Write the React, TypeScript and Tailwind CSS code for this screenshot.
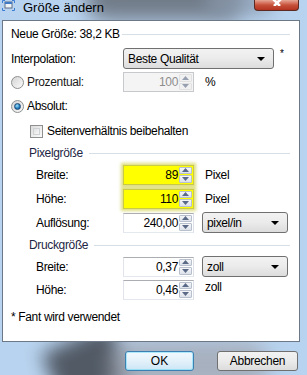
const Up = () => (
    <svg width="7" height="4" viewBox="0 0 7 4"><path d="M0 4 L3.5 0 L7 4 Z" fill="#5a6a86" /></svg>
);
const Down = () => (
    <svg width="7" height="4" viewBox="0 0 7 4"><path d="M0 0 L3.5 4 L7 0 Z" fill="#5a6a86" /></svg>
);

const Spin = ({ value, hi, disabled }: { value: string; hi?: boolean; disabled?: boolean }) => (
    <div
        className={`flex h-[20px] w-[71px] shrink-0 border ${
            hi
                ? 'border-[#c9c94a] bg-[#ffff00] shadow-[0_0_3px_2px_rgba(200,200,40,0.6)]'
                : disabled
                ? 'border-[#c7c9cc] bg-[#f4f4f4]'
                : 'border-[#abadb3] border-r-[#dbdfe6] border-b-[#e3e9ef] border-l-[#e2e3ea] bg-white'
        }`}
    >
        <div className={`flex-1 flex items-center justify-end pr-[1px] text-[12px] ${disabled ? 'text-[#8d8d8d]' : 'text-black'}`}>
            {value}
        </div>
        <div className="w-[14px] flex flex-col gap-px py-px pr-px">
            <div className={`flex-1 flex items-center justify-center rounded-[1px] border ${disabled ? 'border-[#d6d6d6] bg-[#f0f0f0] opacity-60' : 'border-[#b7c0cc] bg-gradient-to-b from-[#f5f6f8] to-[#dde2ea]'}`}>
                <Up />
            </div>
            <div className={`flex-1 flex items-center justify-center rounded-[1px] border ${disabled ? 'border-[#d6d6d6] bg-[#f0f0f0] opacity-60' : 'border-[#b7c0cc] bg-gradient-to-b from-[#f5f6f8] to-[#dde2ea]'}`}>
                <Down />
            </div>
        </div>
    </div>
);

const Combo = ({ value, w }: { value: string; w: string }) => (
    <div className={`${w} h-[21px] shrink-0 flex items-center rounded-[3px] border border-[#707070] bg-gradient-to-b from-[#f2f2f2] via-[#ebebeb] to-[#dcdcdc] pl-[4px] pr-[8px] text-[12px]`}>
        <span className="flex-1 whitespace-nowrap">{value}</span>
        <svg width="8" height="4" viewBox="0 0 8 4"><path d="M0 0 L8 0 L4 4 Z" fill="#000" /></svg>
    </div>
);

const Radio = ({ checked }: { checked?: boolean }) => (
    <div className="w-[13px] h-[13px] shrink-0 rounded-full border border-[#8e8f8f] bg-gradient-to-br from-[#d4d4d4] to-[#fbfbfb] flex items-center justify-center">
        {checked && <div className="w-[7px] h-[7px] rounded-full bg-[radial-gradient(circle_at_40%_35%,#9fe3ff,#1b76b8_60%,#0c4a84)] border border-[#1f4b77]"></div>}
    </div>
);

const Section = ({ title }: { title: string }) => (
    <div className="flex items-center h-[18px] pl-[26px] pr-[9px] mt-[3px] text-[#1d2544]">
        <span className="whitespace-nowrap">{title}</span>
        <div className="flex-1 h-px bg-[#d5dfe5] ml-[6px]"></div>
    </div>
);

const Row = ({ label, children, mt = 'mt-[3px]' }: { label: string; children: React.ReactNode; mt?: string }) => (
    <div className={`flex items-center h-[21px] ${mt}`}>
        <div className="w-[120px] shrink-0 pl-[33px]">{label}</div>
        {children}
    </div>
);

export default function App() {
    return (
        <div className="w-[307px] h-[375px] relative overflow-hidden bg-[#b8d3ef] font-['Liberation_Sans',Arial,sans-serif] text-[11.5px] text-black leading-none">
            {/* glass blur */}
            <div className="absolute left-[85px] top-[-22px] w-[160px] h-[42px] rounded-full bg-[#5f656e] blur-[10px] opacity-80"></div>
            <div className="absolute left-[205px] top-[-10px] w-[70px] h-[25px] rounded-full bg-[#8a9aae] blur-[8px] opacity-70"></div>
            <div className="absolute left-[50px] top-[336px] w-[75px] h-[60px] rotate-[-25deg] bg-[#40454e] blur-[9px] opacity-85"></div>
            <div className="absolute left-[110px] top-[340px] w-[160px] h-[50px] rounded-full bg-[#a3a8b3] blur-[10px] opacity-80"></div>

            <div className="relative flex flex-col h-full">
                {/* title bar */}
                <div className="h-[20px] flex items-start relative">
                    <svg className="ml-[2px]" width="13" height="11" viewBox="0 0 13 11">
                        <rect x="3" y="2" width="7" height="6" fill="#eef3f8" stroke="#5c6f86" strokeWidth="1" />
                        <rect x="3" y="2" width="7" height="2" fill="#3f79c6" />
                        <path d="M0.5 3 V0.5 H3 M10 0.5 H12.5 V3 M12.5 8 V10.5 H10 M3 10.5 H0.5 V8" fill="none" stroke="#3c7cd6" strokeWidth="1" />
                    </svg>
                    <span className="ml-[8px] mt-[1px] text-[13px]">Größe ändern</span>
                    <div className="absolute left-[254px] top-0 w-[45px] h-[11px] rounded-b-[4px] border border-t-0 border-[#5a2a23] bg-gradient-to-b from-[#e6a695] via-[#c7513b] to-[#b2331f] flex items-start justify-center overflow-hidden">
                        <svg width="14" height="6" viewBox="0 0 14 6"><path d="M2 -2 L7 3 L12 -2 M4 6 L7 3 L10 6" stroke="#fff" strokeWidth="2.5" fill="none" /></svg>
                    </div>
                </div>

                {/* white panel */}
                <div className="ml-[2px] w-[298px] h-[322px] border border-[#6d7886] bg-white flex flex-col pt-[4px] text-[12px] tracking-[-0.35px]">
                    <div className="flex items-center h-[18px] pl-[8px] pr-[9px]">
                        <div className="w-[111px] shrink-0 whitespace-nowrap">Neue Größe: 38,2 KB</div>
                        <div className="flex-1 h-px bg-[#d5dfe5]"></div>
                    </div>

                    <div className="flex items-center h-[21px] mt-[5px] pl-[8px]">
                        <div className="w-[112px] shrink-0">Interpolation:</div>
                        <Combo value="Beste Qualität" w="w-[151px]" />
                        <span className="ml-[6px] self-start mt-[1px] text-[10px]">*</span>
                    </div>

                    <div className="flex items-center h-[20px] mt-[3px] pl-[8px]">
                        <div className="w-[112px] shrink-0 flex items-center gap-[3px] text-[#1a1a1a]">
                            <Radio />
                            <span>Prozentual:</span>
                        </div>
                        <Spin value="100" disabled />
                        <span className="ml-[11px]">%</span>
                    </div>

                    <div className="flex items-center h-[20px] mt-[4px] pl-[8px] gap-[3px]">
                        <Radio checked />
                        <span>Absolut:</span>
                    </div>

                    <div className="flex items-center h-[20px] mt-[5px] pl-[27px] gap-[4px]">
                        <div className="w-[13px] h-[13px] shrink-0 border border-[#8e8f8f] bg-gradient-to-br from-[#dcdcdc] to-[#fbfbfb] p-[2px]">
                            <div className="w-full h-full border border-[#cfd2d5] bg-gradient-to-br from-[#e0e0e0] to-[#f7f7f7]"></div>
                        </div>
                        <span className="whitespace-nowrap">Seitenverhältnis beibehalten</span>
                    </div>

                    <Section title="Pixelgröße" />

                    <Row label="Breite:" mt="mt-[2px]">
                        <Spin value="89" hi />
                        <span className="ml-[11px]">Pixel</span>
                    </Row>
                    <Row label="Höhe:">
                        <Spin value="110" hi />
                        <span className="ml-[11px]">Pixel</span>
                    </Row>
                    <Row label="Auflösung:">
                        <Spin value="240,00" />
                        <div className="ml-[8px]"><Combo value="pixel/in" w="w-[86px]" /></div>
                    </Row>

                    <Section title="Druckgröße" />

                    <Row label="Breite:" mt="mt-[2px]">
                        <Spin value="0,37" />
                        <div className="ml-[8px]"><Combo value="zoll" w="w-[86px]" /></div>
                    </Row>
                    <Row label="Höhe:" mt="mt-[2px]">
                        <Spin value="0,46" />
                        <span className="ml-[11px] self-start mt-[2px]">zoll</span>
                    </Row>

                    <div className="h-[18px] flex items-center pl-[8px] mt-[8px] whitespace-nowrap">* Fant wird verwendet</div>
                </div>

                {/* buttons */}
                <div className="flex justify-end gap-[23px] mt-[9px] pr-[9px] text-[12px]">
                    <button className="w-[69px] h-[20px] rounded-[3px] border border-[#3c7fb1] bg-gradient-to-b from-[#f2f9fd] via-[#e3f1fa] to-[#cde6f6] shadow-[inset_0_0_0_1px_#48d2fb66] flex items-center justify-center">
                        OK
                    </button>
                    <button className="w-[81px] h-[20px] rounded-[3px] border border-[#707070] bg-gradient-to-b from-[#f2f2f2] via-[#ebebeb] to-[#dcdcdc] flex items-center justify-center tracking-[-0.3px]">
                        Abbrechen
                    </button>
                </div>
            </div>
        </div>
    );
}
